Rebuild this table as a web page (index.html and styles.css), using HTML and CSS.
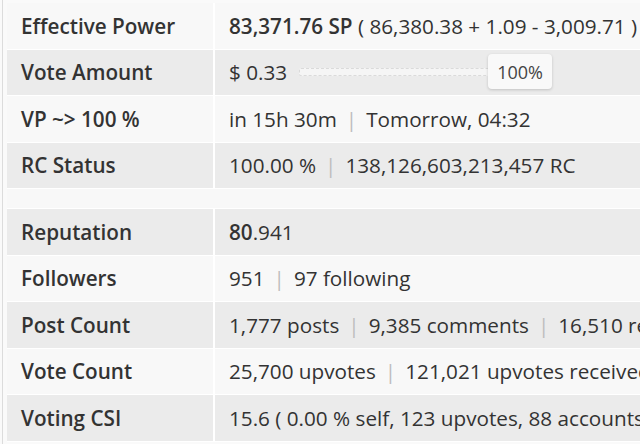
FILE: index.html
```html
<!DOCTYPE html>
<html>
<head>
<meta charset="utf-8">
<link rel="stylesheet" href="styles.css">
</head>
<body>
<div class="page">
  <div class="table">
    <div class="row light">
      <div class="label">Effective Power</div>
      <div class="value"><b>83,371.76 SP</b>&nbsp;( 86,380.38 + 1.09 - 3,009.71 )</div>
    </div>
    <div class="row grey">
      <div class="label">Vote Amount</div>
      <div class="value">$ 0.33
        <div class="slider">
          <div class="track"></div>
          <div class="thumb">100%</div>
        </div>
      </div>
    </div>
    <div class="row light">
      <div class="label">VP ~&gt; 100 %</div>
      <div class="value">in 15h 30m<span class="sep">|</span>Tomorrow, 04:32</div>
    </div>
    <div class="row grey">
      <div class="label">RC Status</div>
      <div class="value">100.00 %<span class="sep">|</span>138,126,603,213,457 RC</div>
    </div>
    <div class="spacer"></div>
    <div class="row grey">
      <div class="label">Reputation</div>
      <div class="value"><b>80</b>.941</div>
    </div>
    <div class="row light">
      <div class="label">Followers</div>
      <div class="value">951<span class="sep">|</span>97 following</div>
    </div>
    <div class="row grey">
      <div class="label">Post Count</div>
      <div class="value">1,777 posts<span class="sep">|</span>9,385 comments<span class="sep">|</span>16,510 replies</div>
    </div>
    <div class="row light">
      <div class="label">Vote Count</div>
      <div class="value">25,700 upvotes<span class="sep">|</span>121,021 upvotes received</div>
    </div>
    <div class="row grey">
      <div class="label">Voting CSI</div>
      <div class="value">15.6 ( 0.00 % self, 123 upvotes, 88 accounts</div>
    </div>
  </div>
</div>
</body>
</html>
```

FILE: styles.css
```css
html, body {
  margin: 0;
  padding: 0;
  background: #fafafa;
  overflow: hidden;
}
body {
  font-family: "Open Sans", "Liberation Sans", sans-serif;
  color: #333;
  font-size: 20.7px;
}
.page {
  margin-left: 2px;
  border-left: 1px solid #dcdcdc;
  padding-left: 4px;
  padding-top: 3px;
  height: 444px;
}
.table {
  width: 1000px;
}
.row {
  display: grid;
  grid-template-columns: 208px 1fr;
  height: 45.5px;
  border-bottom: 1px solid #ffffff;
}
.row.light { background: #f8f8f8; }
.row.grey { background: #ebebeb; }
.spacer {
  height: 19px;
  background: #f8f8f8;
  border-bottom: 1px solid #ffffff;
}
.label {
  display: flex;
  align-items: center;
  padding-left: 14px;
  font-weight: 600;
  border-right: 2px solid #ffffff;
  white-space: nowrap;
}
.value {
  display: flex;
  align-items: center;
  padding-left: 14px;
  white-space: nowrap;
}
.value b { font-weight: 600; }
.sep {
  color: #bdbdbd;
  margin: 0 9px;
}
.slider {
  position: relative;
  display: flex;
  align-items: center;
  margin-left: 12px;
  width: 254px;
  height: 36px;
}
.track {
  width: 192px;
  height: 6px;
  background: #f5f5f5;
  border: 1px dashed #dadada;
  border-radius: 2px;
}
.thumb {
  position: absolute;
  left: 189px;
  top: 0;
  width: 64px;
  height: 35px;
  background: #f9f9f9;
  border-radius: 4px;
  box-shadow: 0 1px 3px rgba(0,0,0,0.18);
  font-size: 18px;
  color: #444;
  display: flex;
  align-items: center;
  justify-content: center;
}
```
